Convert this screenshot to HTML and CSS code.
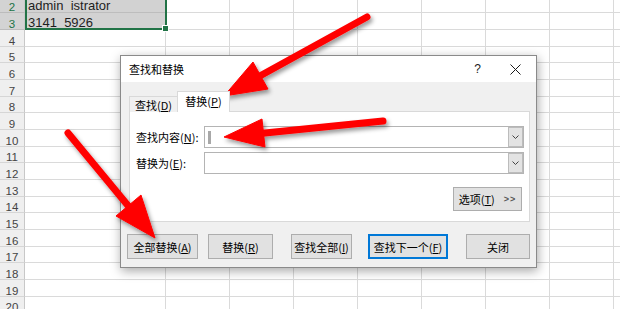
FILE: index.html
```html
<!DOCTYPE html>
<html lang="zh-CN">
<head>
<meta charset="utf-8">
<title>查找和替换</title>
<link rel="stylesheet" href="styles.css">
</head>
<body>
<div class="sheet">
  <div class="row r-top sel-row"><div class="rh">2</div><div class="ca">admin  istrator</div><div class="rest"></div></div>
  <div class="row sel-row"><div class="rh">3</div><div class="ca">3141  5926</div><div class="rest"></div></div>
  <div class="row"><div class="rh">4</div><div class="ca"></div><div class="rest"></div></div>
  <div class="row short"><div class="rh">5</div><div class="ca"></div><div class="rest"></div></div>
  <div class="row"><div class="rh">6</div><div class="ca"></div><div class="rest"></div></div>
  <div class="row"><div class="rh">7</div><div class="ca"></div><div class="rest"></div></div>
  <div class="row short"><div class="rh">8</div><div class="ca"></div><div class="rest"></div></div>
  <div class="row"><div class="rh">9</div><div class="ca"></div><div class="rest"></div></div>
  <div class="row"><div class="rh">10</div><div class="ca"></div><div class="rest"></div></div>
  <div class="row short"><div class="rh">11</div><div class="ca"></div><div class="rest"></div></div>
  <div class="row"><div class="rh">12</div><div class="ca"></div><div class="rest"></div></div>
  <div class="row"><div class="rh">13</div><div class="ca"></div><div class="rest"></div></div>
  <div class="row short"><div class="rh">14</div><div class="ca"></div><div class="rest"></div></div>
  <div class="row"><div class="rh">15</div><div class="ca"></div><div class="rest"></div></div>
  <div class="row"><div class="rh">16</div><div class="ca"></div><div class="rest"></div></div>
  <div class="row short"><div class="rh">17</div><div class="ca"></div><div class="rest"></div></div>
  <div class="row"><div class="rh">18</div><div class="ca"></div><div class="rest"></div></div>
  <div class="row"><div class="rh">19</div><div class="ca"></div><div class="rest"></div></div>
  <div class="row short"><div class="rh">20</div><div class="ca"></div><div class="rest"></div></div>
  <div class="sel-frame"><span class="handle"></span></div>
</div>

<div class="dialog">
  <div class="titlebar">
    <span class="title">查找和替换</span>
    <span class="help">?</span>
    <svg class="close" width="11" height="11" viewBox="0 0 11 11"><path d="M0.5 0.5L10.5 10.5M10.5 0.5L0.5 10.5" stroke="#1a1a1a" stroke-width="1" fill="none"/></svg>
  </div>
  <div class="dbody">
    <div class="tabs">
      <div class="tab">查找(<u>D</u>)</div>
      <div class="tab active">替换(<u>P</u>)</div>
    </div>
    <div class="panel">
      <div class="field">
        <span class="label">查找内容(<u>N</u>):</span>
        <div class="combo"><span class="caret"></span><span class="dd"><svg width="7" height="4" viewBox="0 0 7 4"><path d="M0.5 0.5L3.5 3.5L6.5 0.5" stroke="#444" fill="none"/></svg></span></div>
      </div>
      <div class="field">
        <span class="label">替换为(<u>E</u>):</span>
        <div class="combo"><span class="dd"><svg width="7" height="4" viewBox="0 0 7 4"><path d="M0.5 0.5L3.5 3.5L6.5 0.5" stroke="#444" fill="none"/></svg></span></div>
      </div>
      <button class="btn opt">选项(<u>T</u>)<span class="chev">&gt;&gt;</span></button>
    </div>
    <div class="actions">
      <button class="btn b-all">全部替换(<u>A</u>)</button>
      <button class="btn b-rep">替换(<u>R</u>)</button>
      <button class="btn b-findall">查找全部(<u>I</u>)</button>
      <button class="btn b-next">查找下一个(<u>F</u>)</button>
      <button class="btn b-close">关闭</button>
    </div>
  </div>
</div>

<svg class="arrows" width="620" height="309" viewBox="0 0 620 309">
  <defs>
    <filter id="sh" x="-30%" y="-30%" width="160%" height="160%">
      <feDropShadow dx="2" dy="3" stdDeviation="2" flood-color="#000" flood-opacity="0.4"/>
    </filter>
  </defs>
  <g filter="url(#sh)" fill="#ff0000" stroke="#ff0000">
    <line x1="367" y1="17" x2="258" y2="77" stroke-width="7" stroke-linecap="round"/>
    <polygon points="224,96 253,62 268,89" stroke-width="1"/>
  </g>
  <g filter="url(#sh)" fill="#ff0000" stroke="#ff0000">
    <line x1="383" y1="121" x2="260" y2="133.5" stroke-width="7" stroke-linecap="round"/>
    <polygon points="224,137 262,119 265,147" stroke-width="1"/>
  </g>
  <g filter="url(#sh)" fill="#ff0000" stroke="#ff0000">
    <line x1="68" y1="133" x2="130" y2="208" stroke-width="7" stroke-linecap="round"/>
    <polygon points="155,238 116,216 141,195" stroke-width="1"/>
  </g>
</svg>
</body>
</html>
```

FILE: styles.css
```css
* { box-sizing: border-box; }

html, body { margin: 0; padding: 0; }

body {
  width: 620px;
  height: 309px;
  overflow: hidden;
  position: relative;
  background: #ffffff;
  font-family: "Liberation Sans", Arial, sans-serif;
}

/* ---------- spreadsheet ---------- */
.sheet {
  position: relative;
  display: flex;
  flex-direction: column;
}

.row {
  display: flex;
  height: 17px;
  flex: none;
}

.row.short { height: 16px; }
.row.r-top { height: 13px; }

.rh {
  width: 25px;
  flex: none;
  background: #efefef;
  border-right: 1px solid #c8c8c8;
  border-bottom: 1px solid #d6d6d6;
  color: #444;
  font-size: 11.5px;
  line-height: 10px;
  display: flex;
  align-items: flex-end;
  justify-content: center;
}

.sel-row .rh {
  background: #d3d3d3;
  color: #217346;
  border-bottom-color: #bcbcbc;
}

.ca {
  width: 141px;
  flex: none;
  border-right: 1px solid #dadada;
  border-bottom: 1px solid #dadada;
  font-size: 13px;
  line-height: 12px;
  white-space: pre;
  padding-left: 3px;
  color: #1e1e1e;
  display: flex;
  align-items: flex-end;
}

.sel-row .ca {
  background: #d2d2d2;
  border-bottom-color: #bdbdbd;
}

.rest {
  flex: 1;
  border-bottom: 1px solid #dadada;
  background: repeating-linear-gradient(90deg, transparent 0 63px, #dadada 63px 64px);
}

.sel-frame {
  position: absolute;
  left: 25px;
  top: -5px;
  width: 142px;
  height: 35px;
  border: 2px solid #217346;
}

.handle {
  position: absolute;
  left: 135px;
  top: 28px;
  width: 7px;
  height: 7px;
  background: #217346;
  border: 1px solid #ffffff;
}

/* ---------- dialog ---------- */
.dialog {
  position: absolute;
  left: 120px;
  top: 55px;
  width: 417px;
  height: 213px;
  background: #f0f0f0;
  border: 1px solid #8a8a8a;
  box-shadow: 1px 3px 10px rgba(0, 0, 0, 0.35);
  display: flex;
  flex-direction: column;
  font-family: "Noto Sans CJK SC", "Microsoft YaHei", sans-serif;
  font-size: 11px;
  color: #000;
}

.titlebar {
  height: 26px;
  flex: none;
  background: #ffffff;
  display: flex;
  align-items: center;
  padding: 0 15px 0 8px;
}

.title { line-height: 14px; }

.help {
  margin-left: auto;
  font-family: "Liberation Sans", Arial, sans-serif;
  font-size: 12px;
  color: #222;
}

.close { margin-left: 29px; }

.dbody {
  flex: 1;
  padding: 9px 6px 0 8px;
  display: flex;
  flex-direction: column;
}

.tabs {
  display: flex;
  align-items: flex-end;
  height: 21px;
  position: relative;
  z-index: 1;
}

.tab {
  width: 49px;
  height: 16px;
  border: 1px solid #d9d9d9;
  border-bottom: none;
  background: #f0f0f0;
  display: flex;
  align-items: center;
  justify-content: center;
  line-height: 12px;
}

.tab.active {
  width: 53px;
  height: 21px;
  background: #ffffff;
  margin-left: -1px;
  padding-bottom: 2px;
}

.panel {
  margin-top: -1px;
  height: 111px;
  background: #ffffff;
  border: 1px solid #d9d9d9;
  padding: 14px 5px 0 6px;
  display: flex;
  flex-direction: column;
}

.field {
  display: flex;
  align-items: center;
  height: 22px;
  margin-bottom: 4px;
}

.label {
  width: 68px;
  flex: none;
  line-height: 12px;
}

.combo {
  width: 320px;
  height: 22px;
  border: 1px solid #b4b4b4;
  background: #ffffff;
  display: flex;
  align-items: center;
}

.caret {
  width: 3px;
  height: 13px;
  margin-left: 3px;
  background: #a8a8a8;
}

.dd {
  margin-left: auto;
  width: 15px;
  height: 20px;
  background: #e3e3e3;
  border: 1px solid #bcbcbc;
  display: flex;
  align-items: center;
  justify-content: center;
}

.btn {
  font-family: inherit;
  font-size: 11px;
  color: #000;
  background: #e1e1e1;
  border: 1px solid #adadad;
  padding: 0;
  height: 25px;
  display: flex;
  align-items: center;
  justify-content: center;
  line-height: 12px;
}

.opt {
  align-self: flex-end;
  margin: 9px 2px 0 0;
  width: 69px;
  height: 24px;
}

.chev {
  margin-left: 9px;
  font-family: "Liberation Sans", Arial, sans-serif;
  font-size: 9px;
  font-weight: bold;
  letter-spacing: 1px;
  color: #555;
}

.actions {
  display: flex;
  margin: 12px 0 0 -2px;
}

.b-all { width: 71px; }
.b-rep { width: 65px; margin-left: 10px; }
.b-findall { width: 61px; margin-left: 18px; }
.b-next {
  width: 80px;
  margin-left: 16px;
  border-color: #0078d7;
  box-shadow: inset 0 0 0 1px #0078d7;
}
.b-close { width: 64px; margin-left: 18px; }

/* ---------- annotation arrows ---------- */
.arrows {
  position: absolute;
  left: 0;
  top: 0;
  pointer-events: none;
}
```
